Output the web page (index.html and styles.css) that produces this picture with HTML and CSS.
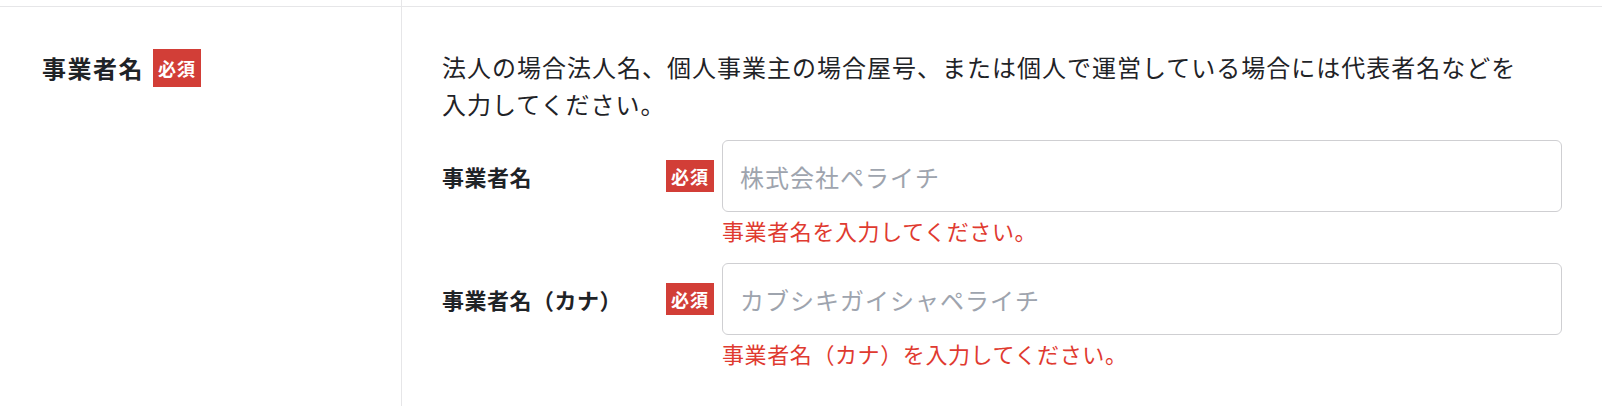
FILE: index.html
```html
<!DOCTYPE html>
<html lang="ja">
<head>
    <meta charset="UTF-8">
    <meta name="viewport" content="width=device-width, initial-scale=1.0">
    <title>事業者情報</title>
    <link rel="stylesheet" href="styles.css">
</head>
<body>
    <div class="form-table">
        <div class="form-row form-row-prev">
            <div class="row-head"></div>
            <div class="row-body"></div>
        </div>

        <div class="form-row">
            <div class="row-head">
                <span class="head-label">事業者名</span>
                <span class="badge badge-large">必須</span>
            </div>
            <div class="row-body">
                <p class="field-note">法人の場合法人名、個人事業主の場合屋号、または個人で運営している場合には代表者名などを入力してください。</p>

                <div class="field">
                    <label class="field-label" for="companyName">事業者名</label>
                    <span class="badge">必須</span>
                    <input type="text" id="companyName" name="companyName" placeholder="株式会社ペライチ">
                </div>
                <div class="field-error">事業者名を入力してください。</div>

                <div class="field field-next">
                    <label class="field-label" for="companyNameKana">事業者名（カナ）</label>
                    <span class="badge">必須</span>
                    <input type="text" id="companyNameKana" name="companyNameKana" placeholder="カブシキガイシャペライチ">
                </div>
                <div class="field-error">事業者名（カナ）を入力してください。</div>
            </div>
        </div>
    </div>
</body>
</html>
```

FILE: styles.css
```css
body {
    margin: 0;
    background-color: #fff;
    color: #1f2327;
    font-family: "Noto Sans CJK JP", "Noto Sans", sans-serif;
}

.form-table {
    width: 100%;
}

.form-row {
    display: grid;
    grid-template-columns: 402px 1fr;
}

.form-row-prev {
    height: 6px;
    border-bottom: 1px solid #e6e6e8;
}

.row-head {
    box-sizing: border-box;
    border-right: 1px solid #e6e6e8;
    padding: 42px 0 0 42px;
    display: flex;
    align-items: flex-start;
}

.head-label {
    font-size: 24px;
    font-weight: bold;
    letter-spacing: 1.5px;
    line-height: 38px;
}

.row-body {
    padding: 41px 40px 37px 40px;
}

.field-note {
    margin: 0 0 18px 0;
    max-width: 1090px;
    font-size: 24px;
    line-height: 37px;
    letter-spacing: 1px;
}

.badge {
    display: inline-flex;
    justify-content: center;
    align-items: center;
    flex-shrink: 0;
    width: 48px;
    height: 32px;
    margin-right: 8px;
    background-color: #d23e37;
    color: #fff;
    font-size: 18px;
    font-weight: bold;
    letter-spacing: 1px;
}

.badge-large {
    height: 38px;
    margin: 0 0 0 9px;
}

.field {
    display: flex;
    align-items: center;
}

.field-next {
    margin-top: 17px;
}

.field-label {
    width: 224px;
    flex-shrink: 0;
    font-size: 22px;
    font-weight: bold;
    letter-spacing: 0.5px;
}

.field input {
    flex: 1;
    box-sizing: border-box;
    height: 72px;
    padding: 0 17px;
    border: 1px solid #cfcfd2;
    border-radius: 6px;
    font-family: inherit;
    font-size: 24px;
    letter-spacing: 1px;
    color: #1f2327;
}

.field input::placeholder {
    color: #9ea4ae;
}

.field input:focus {
    outline: none;
    border-color: #9ea4ae;
}

.field-error {
    margin-top: 2px;
    padding-left: 280px;
    color: #df3a30;
    font-size: 22px;
    line-height: 32px;
    letter-spacing: 0.6px;
}
```
